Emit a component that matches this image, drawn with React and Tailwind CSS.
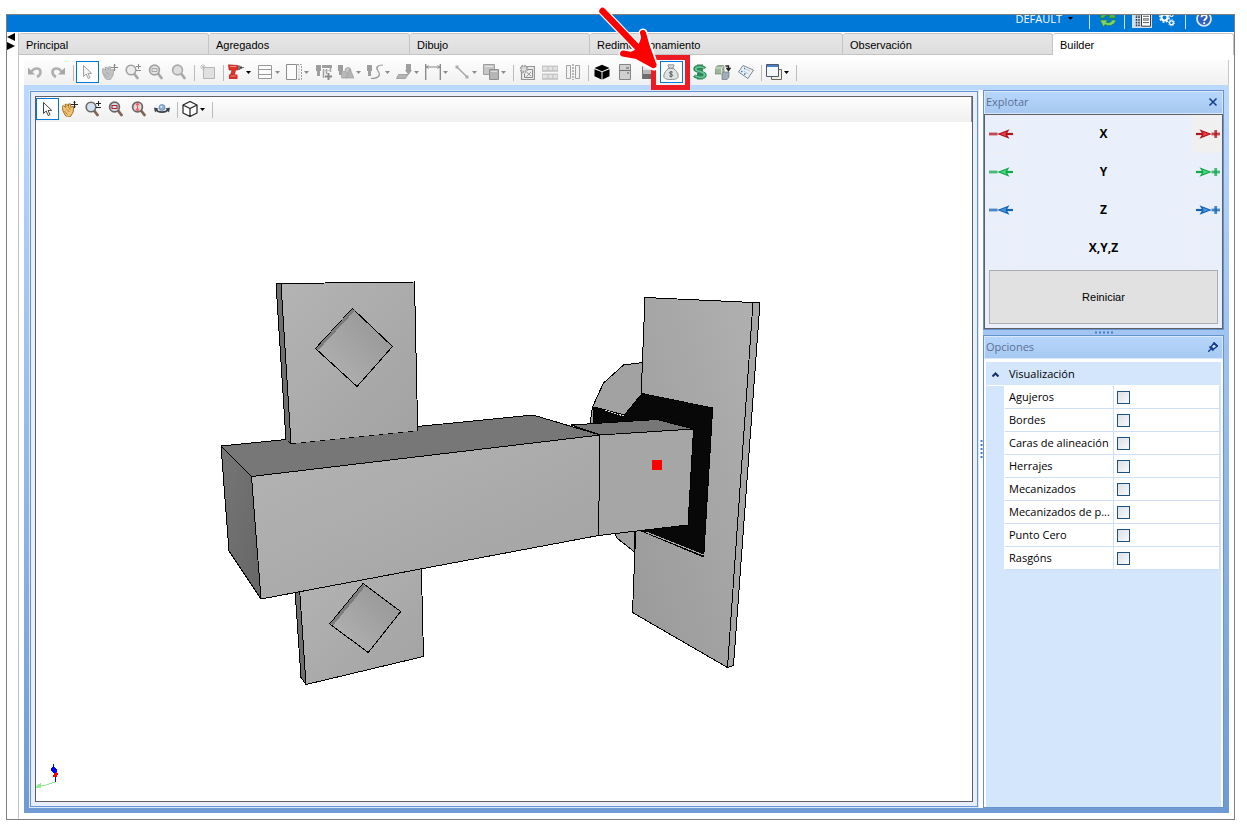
import { useState } from "react";
import clsx from "clsx";

// ── Toolbar icons (16x16) ──────────────────────────────────────────────────
const g = "#9e9e9e";

const icons = {
  undo: (
    <>
      <path d="M4.500 7.500C8 3 13.500 4 13.500 8c0 2-1.500 4-3.500 5" fill="none" stroke="#b0b0b0" strokeWidth="2.600" />
      <path d="M1 3.500v7h7z" fill="#a8a8a8" />
    </>
  ),
  redo: (
    <>
      <path d="M11.500 7.500C8 3 2.500 4 2.500 8c0 2 1.500 4 3.500 5" fill="none" stroke="#b0b0b0" strokeWidth="2.600" />
      <path d="M15 3.500v7H8z" fill="#a8a8a8" />
    </>
  ),
  cursorGray: <path d="M4.500 1.500v11l2.700-2.500 2 4.500 1.800-.8-2-4.300h3.700z" fill="#f4f4f4" stroke="#a0a0a0" />,
  cursor: <path d="M4.500 1.500v11l2.700-2.500 2 4.500 1.800-.8-2-4.300h3.700z" fill="#fff" stroke="#444" />,
  handGray: (
    <>
      <path d="M0 5.500l1.500-1L4 6.500 3 3.500l1.700-.5L6.500 5.500V3l1.800-.2.700 3.700 1-1.200 1.500.7-.3 5L10 13l-2 3H5.500L3 14 1 10z" fill="#c2c2c2" stroke="#a2a2a2" strokeWidth=".8" />
      <path d="M2.500 10l3 3.500M4.500 8l3 3" stroke="#999" strokeWidth=".8" />
      <path d="M12.500 0v7M9 3.500h7M11.500 1.300h2M11.500 5.700h2" stroke="#888" fill="none" />
    </>
  ),
  hand: (
    <>
      <path d="M0 5.500l1.500-1L4 6.500 3 3.500l1.700-.5L6.500 5.500V3l1.800-.2.700 3.700 1-1.200 1.500.7-.3 5L10 13l-2 3H5.500L3 14 1 10z" fill="#f0c274" stroke="#9a6418" strokeWidth=".9" />
      <path d="M2.500 10l3 3.500M4.500 8l3 3M6.500 6l2 3" stroke="#a8701c" strokeWidth=".8" />
      <path d="M12.500 0v7M9 3.500h7M11.500 1.300h2M11.500 5.700h2" stroke="#222" fill="none" />
    </>
  ),
  zoomPmGray: (
    <>
      <path d="M9 9.500l3.500 4.500" stroke="#a8a8a8" strokeWidth="2.800" strokeLinecap="round" />
      <circle cx="6" cy="6" r="4.800" fill="#ececec" stroke="#a2a2a2" strokeWidth="1.600" />
      <path d="M13.500 0v5M11 2.500h5M11 6.500h5" stroke="#8c8c8c" />
    </>
  ),
  zoomPm: (
    <>
      <path d="M9 9.500l3.500 4.500" stroke="#806350" strokeWidth="2.800" strokeLinecap="round" />
      <circle cx="6" cy="6" r="4.800" fill="#d3e2f2" stroke="#686868" strokeWidth="1.600" />
      <path d="M13.500 0v5M11 2.500h5M11 6.500h5" stroke="#222" />
    </>
  ),
  zoomWinGray: (
    <>
      <path d="M10 9.500l3.500 4.500" stroke="#a8a8a8" strokeWidth="2.800" strokeLinecap="round" />
      <circle cx="6.500" cy="6" r="4.900" fill="#e4e4e4" stroke="#a2a2a2" strokeWidth="1.700" />
      <path d="M4 4.500h5v3H4z" fill="none" stroke="#a8a8a8" />
    </>
  ),
  zoomWin: (
    <>
      <path d="M10 9.500l3.500 4.500" stroke="#806350" strokeWidth="2.800" strokeLinecap="round" />
      <circle cx="6.500" cy="6" r="4.900" fill="#d5dbe2" stroke="#686868" strokeWidth="1.700" />
      <path d="M4 4.500h5v3H4z" fill="none" stroke="#b52530" strokeWidth="1.100" />
    </>
  ),
  zoomFitGray: (
    <>
      <path d="M10 9.500l3.500 4.500" stroke="#a8a8a8" strokeWidth="2.800" strokeLinecap="round" />
      <circle cx="6.500" cy="6" r="4.900" fill="#dedede" stroke="#ababab" strokeWidth="1.700" />
    </>
  ),
  zoomFit: (
    <>
      <path d="M10 9.500l3.500 4.500" stroke="#806350" strokeWidth="2.800" strokeLinecap="round" />
      <circle cx="6.500" cy="6" r="4.900" fill="#e3d8da" stroke="#686868" strokeWidth="1.700" />
      <path d="M6.500 2.500v7M5 4l1.500-1.700L8 4M5 8l1.500 1.700L8 8" fill="none" stroke="#ff5a5f" strokeWidth="1.200" />
    </>
  ),
  orbit: (
    <>
      <circle cx="8" cy="6.500" r="3" fill="#8fb0d8" stroke="#5c7ca8" strokeWidth=".7" />
      <circle cx="7.300" cy="5.700" r="1" fill="#e7f0fa" />
      <path d="M2 8.500c2 3.500 10 3.500 12 0" fill="none" stroke="#3a4148" strokeWidth="1.700" />
      <path d="M0 6.500l4.500 1L1 11.500zM16 6.500l-4.500 1 3.500 4z" fill="#3a4148" />
    </>
  ),
  cubeWire: (
    <path d="M8 .5l7 3.500v8L8 15.500 1 12V4zM1 4l7 3.500L15 4M8 7.500v8" fill="#fff" stroke="#222" strokeWidth="1.200" strokeLinejoin="round" />
  ),
  newItem: (
    <>
      <path d="M3.500 3.500h11v11h-11z" fill="#e0e0e0" stroke="#b5b5b5" />
      <path d="M3 0v6M0 3h6M1 1l4 4M5 1L1 5" stroke="#bcbcbc" strokeWidth=".8" />
    </>
  ),
  drill: (
    <>
      <path d="M.5 .8L10 1.500v4.500H7.500L6.500 11H2.500L4 6H1z" fill="#e0342b" stroke="#a01d18" strokeWidth=".6" />
      <path d="M1 10.500h8.500V15H1z" fill="#d42e25" />
      <path d="M10 1.500h2.300V6H10z" fill="#777" />
      <path d="M12 2.500h2v2.300h-2z" fill="#444" />
      <path d="M14 3.600h2" stroke="#666" />
      <path d="M2 2.500h6M2.500 12h5" stroke="#f58a80" />
    </>
  ),
  shelf: <path d="M1.500 1.500h13v13h-13zM1.500 5.500h13M1.500 10.500h13" fill="#fcfcfc" stroke="#999" />,
  dashedBox: (
    <>
      <path d="M.5 .5h10v15H.5z" fill="#fbfbfb" stroke="#8c8c8c" />
      <path d="M11 .5h4.500v15H11" fill="none" stroke="#a0a0a0" strokeDasharray="2 1" />
      <path d="M13 1v15" stroke="#c6c6c6" strokeDasharray="2 1" />
    </>
  ),
  mill: (
    <>
      <path d="M0 1h5v6H4v5H1V7H0zM6 1h10v3H6z" fill={g} />
      <path d="M7.500 5v9M10.500 5v5M14.500 4v4" stroke={g} strokeWidth="1.500" />
      <path d="M7 6.500h8" stroke="#bbb" />
      <path d="M12.500 9v7M9 12.500h7" stroke="#8a8a8a" strokeWidth="2" />
    </>
  ),
  shapes: (
    <>
      <path d="M0 1h5v6H4v4H1V7H0z" fill={g} />
      <path d="M3.500 7.500h6v6.500h-6z" fill="#b9b9b9" stroke={g} strokeWidth=".7" />
      <circle cx="10" cy="6.500" r="3" fill="#c3c3c3" stroke={g} strokeWidth=".7" />
      <path d="M12 5l4 9H8z" fill="#b5b5b5" stroke={g} strokeWidth=".7" />
    </>
  ),
  spline: (
    <>
      <path d="M0 1h5v6H4v5H1V7H0z" fill={g} />
      <path d="M16 1c-5 0-8 2-5 6s1 7.500-7 7.500" fill="none" stroke="#949494" strokeWidth="1.200" />
    </>
  ),
  saw: (
    <>
      <path d="M10 0h5v6h1l-3.500 5L9 6h1z" fill={g} />
      <path d="M2.500 10.500H12l-2.500 4H.5z" fill="#b4b4b4" stroke={g} strokeWidth=".9" />
    </>
  ),
  dimension: (
    <>
      <path d="M.7 0v16M15.300 0v16" stroke="#858585" strokeWidth="1.300" />
      <path d="M1 3h14M3.500 1.500L1.500 3l2 1.500M12.500 1.500l2 1.500-2 1.500" fill="none" stroke="#858585" />
    </>
  ),
  line: (
    <>
      <path d="M3 3l10 10" stroke={g} strokeWidth="1.300" />
      <path d="M1.500 1.500h3v3h-3zM11.500 11.500h3v3h-3z" fill="#adadad" />
    </>
  ),
  copy: (
    <>
      <path d="M.5 .5h11v10H.5z" fill="#c6c6c6" stroke={g} />
      <path d="M2 2.500h8" stroke="#e4e4e4" />
      <path d="M6.500 5.500h9v10h-9z" fill="#b5b5b5" stroke="#8f8f8f" />
      <path d="M8 7.500h6" stroke="#ddd" />
    </>
  ),
  gearPage: (
    <>
      <path d="M2.500 2.500h13v13h-13z" fill="#ececec" stroke="#949494" strokeWidth="1.200" />
      <circle cx="5" cy="5" r="3.200" fill="#dcdcdc" stroke="#a2a2a2" strokeWidth="2.200" strokeDasharray="1.500 1" />
      <path d="M9 5.500h4.500v8H5.500v-4" fill="none" stroke="#8a8a8a" />
      <path d="M8 8.500l4 3.500M12 8l-4.500 4.500" stroke="#999" />
    </>
  ),
  blocks: (
    <>
      <path d="M0 1.500h16v5H0zM0 9.500h16v5H0z" fill="#c9c9c9" />
      <path d="M1 3h4v3H1zM6.500 3h3.500v3H6.500zM11.500 3H15v3h-3.500zM1 11h4v3H1zM6.500 11h3.500v3H6.500zM11.500 11H15v3h-3.500z" fill="#e2e2e2" />
      <path d="M0 7h16M0 15h16" stroke="#a8a8a8" />
    </>
  ),
  mirror: (
    <>
      <path d="M1.500 1.500h4v13h-4zM10.500 1.500h4v13h-4z" fill="#f3f3f3" stroke="#a3a3a3" />
      <path d="M8 0v16" stroke="#777" strokeDasharray="2 1" />
    </>
  ),
  cubeSolid: <path d="M8 .8l7.500 3.200L8 7.200.5 4zM.5 5.200L7.500 8v7.500L.5 12.300zM15.500 5.200L8.500 8v7.500l7-3.200z" fill="#000" />,
  cabinet: (
    <>
      <path d="M2.500 .5h11v15h-11z" fill="#d0d0d0" stroke="#848484" />
      <path d="M2.500 6.500h11" stroke="#707070" />
      <path d="M9 4h3M10 9h2" stroke="#555" />
    </>
  ),
  cabinetDark: (
    <>
      <path d="M2 1h13v5H2z" fill="#e4e4e4" />
      <path d="M2 6h13v4H2z" fill="#b8b8b8" />
      <path d="M2 10h13v5H2z" fill="#6c6c6c" />
      <path d="M2.500 1v14" stroke="#777" />
    </>
  ),
  moneyBag: (
    <>
      <path d="M6 4.200C3 6 .8 9 .8 12c0 2.500 2 3.500 7.200 3.500s7.200-1 7.200-3.500c0-3-2.200-6-5.200-7.800z" fill="#dfe4e2" stroke="#7d8784" strokeWidth=".9" />
      <path d="M4.800 1c1.200-1 1.800.2 3.200-.3 1.400.5 2-.7 3.200.3L10 4.200H6z" fill="#cfd6d3" stroke="#7d8784" strokeWidth=".8" />
      <path d="M9.700 8.300c-1-.9-3.200-.7-3.200.6 0 1.500 3.200.9 3.200 2.400 0 1.300-2.300 1.500-3.500.5M8 7v6.500" fill="none" stroke="#4a5350" strokeWidth=".9" />
    </>
  ),
  dollar: (
    <>
      <path d="M13 4.500C11 1.800 2.800 1.600 2.800 5c0 3.600 10.400 2.200 10.400 6 0 3.600-8.700 3.200-11 .5M6.500 .5v15M9.500 .5v15" fill="none" stroke="#2c8a58" strokeWidth="3" />
      <path d="M12.500 4.500C11 2.500 3.500 2.200 3.500 5c0 3 9.300 2 9.300 6 0 3-7.300 2.800-9.800.5" fill="none" stroke="#6fcb9c" strokeWidth="1.400" />
    </>
  ),
  boxes: (
    <>
      <path d="M0 4l3-2.500h6V8L6.500 10H0z" fill="#9fb59b" stroke="#6f8a6c" strokeWidth=".7" />
      <path d="M0 4h6.500v6M6.500 4L9 1.500" fill="none" stroke="#e0eadd" strokeWidth=".9" />
      <path d="M7 9.500L8.800 8H14v5l-2 2.500H7z" fill="#a3adb8" stroke="#6c7884" strokeWidth=".7" />
      <path d="M10.500 2h3v2.500M12 4.500l1.500 2 1.500-2z" fill="none" stroke="#222" strokeWidth="1.400" />
    </>
  ),
  tag: (
    <>
      <path d="M5 1.500l10.500 4.500L10 14.500.5 8z" fill="#eef2f5" stroke="#7c8791" />
      <path d="M6.500 4.500L12 7M5.500 7l5 3" stroke="#b8c4cf" />
      <path d="M3 7.500h1.500M6 10h1.500M6 4.500h1" stroke="#2f7fd0" strokeWidth="1.400" />
    </>
  ),
  windows: (
    <>
      <path d="M5.500 5.500h10v10h-10z" fill="#f2efdf" stroke="#666" />
      <path d="M.5 .5h12v12H.5z" fill="#f4f6f8" stroke="#4a5868" />
      <path d="M1 1h11v2H1z" fill="#4a80c4" />
    </>
  ),
};

function Icon({ name }) {
  return (
    <svg viewBox="0 0 16 16" className="size-4 shrink-0" aria-hidden="true">
      {icons[name]}
    </svg>
  );
}

function Caret({ className }) {
  return (
    <svg viewBox="0 0 5 3" className={clsx("w-[5px] h-[3px] shrink-0", className)} fill="currentColor" aria-hidden="true">
      <path d="M0 0h5L2.500 3z" />
    </svg>
  );
}

function Sep() {
  return <span className="w-px h-4 mt-1 ml-[3px] mr-[2px] bg-[#bcbcbc] shrink-0" />;
}

function ToolButton({ icon, label, active, children }) {
  return (
    <button
      type="button"
      aria-label={label}
      className={clsx(
        "relative flex items-center pl-[2px] w-[23px] h-[22px] shrink-0 border",
        active ? "border-[#0078d7] bg-white" : "border-transparent"
      )}
    >
      <Icon name={icon} />
      {children}
    </button>
  );
}

function DropButton({ icon, label, dark }) {
  return (
    <button type="button" aria-label={label} aria-haspopup="menu" className="flex items-center gap-[2px] pl-[2px] w-[29px] h-[22px] shrink-0">
      <Icon name={icon} />
      <Caret className={dark ? "text-black" : "text-[#8c8c8c]"} />
    </button>
  );
}

// Red frame and arrow that call out the budget button
function Callout() {
  return (
    <svg viewBox="595 5 100 90" className="absolute z-10 pointer-events-none w-[100px] h-[90px] max-w-none -left-[66px] -top-[57px]" aria-hidden="true">
      <path d="M653.500 57.500h34v30h-34z" fill="none" stroke="#ed1c24" strokeWidth="5" />
      <g strokeLinecap="round" strokeLinejoin="round">
        <path d="M602.500 11L638 48M643 33l11 33-31-12.500" fill="none" stroke="#fff" strokeWidth="9" />
        <path d="M636 46l7-13 11 33-31-12.500z" fill="#fff" />
        <path d="M602.500 11L640 50" fill="none" stroke="#f00" strokeWidth="6.500" />
        <path d="M643 33c0 6 2 10 2 12l8 20-18-11c-4 0-8 0-12-.5 5-1 9-1 14-5z" fill="#f00" />
        <path d="M643 33l4 14 6.500 18M623 53.500l14 2.500 16.500 9" fill="none" stroke="#f00" strokeWidth="6" />
      </g>
    </svg>
  );
}

// ── Title bar ──────────────────────────────────────────────────────────────
function TitleBar() {
  return (
    <header className="flex items-end justify-end h-[17px] overflow-hidden bg-[#0078d7]">
      <div className="flex items-center h-[27px] pr-[22px] text-white shrink-0">
        <button type="button" className="flex items-center gap-[6px] font-['Open_Sans',sans-serif]">
          DEFAULT
          <Caret className="text-black" />
        </button>
        <span className="w-px h-5 ml-4 bg-white/80" />
        <button type="button" aria-label="Actualizar" className="ml-[10px]">
          <svg viewBox="0 0 16 16" className="size-4">
            <path d="M0 7c1-5 7-7 11-4.500L12.500 0 16 7H8.500l1.300-2.300C7 3.700 4.500 5 4 7z" fill="#4db848" stroke="#1f7a25" strokeWidth=".6" />
            <path d="M16 9c-1 5-7 7-11 4.500L3.500 16 0 9h7.500l-1.300 2.300c3 1 5.300-.3 5.800-2.300z" fill="#7fd36a" stroke="#1f7a25" strokeWidth=".6" />
          </svg>
        </button>
        <span className="w-px h-5 ml-2 bg-white/80" />
        <button type="button" aria-label="Lista" className="ml-[7px] bg-[#cfe0f2]">
          <svg viewBox="0 0 20 20" className="w-5 h-[18px]" preserveAspectRatio="none">
            <path d="M4.500 1v17M7 1v17" stroke="#333" strokeWidth="1.500" strokeDasharray="2 1" />
            <path d="M9.500 0h9v18h-9z" fill="#fff" stroke="#333" />
            <path d="M11 4h6M11 7h6M11 14h6" stroke="#555" />
            <path d="M11.500 9.500h5v2h-5z" fill="#bbb" stroke="#555" strokeWidth=".6" />
          </svg>
        </button>
        <button type="button" aria-label="Ajustes" className="ml-[7px]">
          <svg viewBox="0 0 16 16" className="size-4" fill="none" stroke="#fff">
            <circle cx="5.500" cy="6.500" r="3" strokeWidth="2" />
            <circle cx="5.500" cy="6.500" r="4.600" strokeWidth="1.600" strokeDasharray="1.900 1.700" />
            <circle cx="12.500" cy="4" r="1.500" strokeWidth="1.200" />
            <circle cx="12.500" cy="11.800" r="1.900" strokeWidth="1.300" />
            <circle cx="12.500" cy="11.800" r="3" strokeDasharray="1.200 1.100" />
          </svg>
        </button>
        <span className="w-px h-5 ml-[10px] bg-white/80" />
        <button type="button" aria-label="Ayuda" className="ml-[10px]">
          <svg viewBox="0 0 16 16" className="size-4">
            <circle cx="8" cy="8" r="7" fill="#2d62c4" stroke="#dfe8f8" strokeWidth="1.700" />
            <path d="M5.500 6.200c0-3.200 5.200-3 5.200 0 0 1.800-2.500 1.800-2.500 3.800" fill="none" stroke="#fff" strokeWidth="1.800" />
            <circle cx="8.200" cy="12.200" r="1.100" fill="#fff" />
          </svg>
        </button>
      </div>
    </header>
  );
}

// ── Tabs ───────────────────────────────────────────────────────────────────
const tabs = [
  { name: "Principal", width: "w-[190px]" },
  { name: "Agregados", width: "w-[201px]" },
  { name: "Dibujo", width: "w-[180px]" },
  { name: "Redimensionamiento", width: "w-[253px]" },
  { name: "Observación", width: "w-[210px]" },
  { name: "Builder", width: "flex-1" },
];

function Tabs() {
  const [current, setCurrent] = useState("Builder");
  return (
    <nav role="tablist" className="flex h-[22px]">
      {tabs.map((t) => (
        <button
          key={t.name}
          type="button"
          role="tab"
          aria-selected={current === t.name}
          onClick={() => setCurrent(t.name)}
          className={clsx(
            "min-w-0 truncate text-left pl-[7px] border-t border-r rounded-t-[3px] border-[#c4c4c4]",
            t.width,
            current === t.name ? "bg-white" : "bg-linear-to-b from-[#e6e6e6] to-[#dedede] border-b pt-px"
          )}
        >
          {t.name}
        </button>
      ))}
    </nav>
  );
}

function MainToolbar() {
  return (
    <div role="toolbar" className="flex items-start h-[25px] pt-px bg-linear-to-b from-[#fdfdfd] to-[#f0f0f0] border-r border-[#c8c8c8]">
      <ToolButton icon="undo" label="Deshacer" />
      <ToolButton icon="redo" label="Rehacer" />
      <Sep />
      <ToolButton icon="cursorGray" label="Seleccionar" active />
      <ToolButton icon="handGray" label="Mover" />
      <ToolButton icon="zoomPmGray" label="Zoom" />
      <ToolButton icon="zoomWinGray" label="Zoom ventana" />
      <ToolButton icon="zoomFitGray" label="Zoom ajustar" />
      <Sep />
      <ToolButton icon="newItem" label="Nuevo" />
      <Sep />
      <DropButton icon="drill" label="Taladro" dark />
      <DropButton icon="shelf" label="Estante" />
      <DropButton icon="dashedBox" label="Panel" />
      <ToolButton icon="mill" label="Mecanizado" />
      <DropButton icon="shapes" label="Formas" />
      <DropButton icon="spline" label="Curva" />
      <DropButton icon="saw" label="Corte" />
      <DropButton icon="dimension" label="Cota" />
      <DropButton icon="line" label="Línea" />
      <DropButton icon="copy" label="Copiar" />
      <Sep />
      <ToolButton icon="gearPage" label="Propiedades" />
      <ToolButton icon="blocks" label="Bloques" />
      <ToolButton icon="mirror" label="Simetría" />
      <Sep />
      <ToolButton icon="cubeSolid" label="Sólido" />
      <ToolButton icon="cabinet" label="Mueble" />
      <ToolButton icon="cabinetDark" label="Acabado" />
      <ToolButton icon="moneyBag" label="Presupuesto" active>
        <Callout />
      </ToolButton>
      <Sep />
      <ToolButton icon="dollar" label="Precio" />
      <ToolButton icon="boxes" label="Módulos" />
      <ToolButton icon="tag" label="Etiqueta" />
      <Sep />
      <DropButton icon="windows" label="Ventanas" dark />
      <Sep />
    </div>
  );
}

// ── 3D view ────────────────────────────────────────────────────────────────
function Model() {
  return (
    <svg viewBox="36 122 935 679" preserveAspectRatio="xMinYMax meet" className="block w-full h-full" role="img" aria-label="Modelo 3D">
      <defs>
        <linearGradient id="face" x1="0" y1="0" x2="1" y2="1">
          <stop offset="0" stopColor="#b4b4b4" />
          <stop offset="1" stopColor="#a2a2a2" />
        </linearGradient>
        <linearGradient id="faceRight" x1="1" y1="0" x2="0" y2="1">
          <stop offset="0" stopColor="#b0b0b0" />
          <stop offset="1" stopColor="#999" />
        </linearGradient>
        <linearGradient id="notch" x1="0" y1="1" x2="1" y2="0">
          <stop offset="0" stopColor="#b6b6b6" />
          <stop offset="1" stopColor="#929292" />
        </linearGradient>
        <linearGradient id="end" x1="0" y1="0" x2="1" y2="1">
          <stop offset="0" stopColor="#767676" />
          <stop offset="1" stopColor="#666" />
        </linearGradient>
      </defs>
      <g stroke="#000" strokeWidth="1" strokeLinejoin="round" shapeRendering="crispEdges">
        {/* left plate, upper part */}
        <path d="M276 283.500h5l10 160.500-5-4z" fill="#6e6e6e" />
        <path d="M281 283.500l133.500-1.500 3.200 149L291 444z" fill="url(#face)" />
        <path d="M352.500 308.500l40 38-35.500 40-41.500-38z" fill="url(#notch)" />
        <path d="M352 309l3 1.500-37 40-2-2z" fill="#7c7c7c" stroke="none" />
        {/* left plate, lower part */}
        <path d="M295 590l5 0 6 94.500-5-7z" fill="#6e6e6e" />
        <path d="M299.500 588l121.800-22 2.200 90.500L306 684.500z" fill="url(#face)" />
        <path d="M363 583.500l37.700 28-32.400 41-38.600-28.500z" fill="url(#notch)" />
        <path d="M362.500 584.500l2.500 2-32 39-2.500-2z" fill="#7c7c7c" stroke="none" />
        {/* disc behind the right plate */}
        <path d="M643 362.500l-19.500 2.500-20 18-11 24-2.500 17 20 80 7.500 34.500 17 13.500 12-30z" fill="#a2a2a2" />
        {/* right plate */}
        <path d="M645 297.500l108 5-25.500 365-95-55z" fill="url(#faceRight)" />
        <path d="M753 302.500h7l-26.500 363-6 2z" fill="#a6a6a6" />
        <path d="M594 407l30.500 8 17.500-21.500 70.700 14.500-9 149-61-25.500-49-20z" fill="#080808" />
        <path d="M605 410.500l19 5.500" stroke="#ddd" strokeDasharray="2 1" />
        <path d="M646 532l57.500 23" stroke="#aaa" />
        <path d="M610 500l5 34 2.500 4.500 17 13.500V525z" fill="#a2a2a2" />
        {/* main beam */}
        <path d="M221 446l65-6.500 5 4.500 126.500-13v-4.500L533 415l67 20-348.500 41.500z" fill="#777" stroke="none" />
        <path d="M286 439.500L221 446l30.500 30.500L600 435l-67-20-115.500 11.500V431" fill="none" />
        <path d="M251.500 476.500L600 435l-1.500 100.500L261 599z" fill="url(#face)" />
        <path d="M221 446l30.500 30.500L261 599l-32-48z" fill="url(#end)" />
        {/* tenon */}
        <path d="M571.500 425l85.500-5.500 36.500 9.500-93 6z" fill="#777" />
        <path d="M600 435l93.500-6-5.500 96-89.500 10.500z" fill="#a6a6a6" />
      </g>
      <path d="M652 460h10v10h-10z" fill="#f00" />
      {/* axes */}
      <g shapeRendering="crispEdges">
        <path d="M55 782l-9 3-7 1" fill="none" stroke="#90ee90" />
        <path d="M36 786l5-3v5h-5z" fill="#90ee90" />
        <path d="M53.500 764v4M55.500 770v12" stroke="#00f" />
        <path d="M52 767h3l2 3v3h-4l-2-3z" fill="#00f" />
        <path d="M54 773l3-1 1 2-1 3h-4z" fill="#f00" />
      </g>
    </svg>
  );
}

function Viewport() {
  return (
    <main className="flex-1 min-w-0 flex flex-col border border-[#dce9fd]">
      <div className="flex-1 flex flex-col border border-[#6593cf] bg-[#e9effa] p-1">
        <div className="flex-1 flex flex-col border border-[#606060] bg-white">
          <div role="toolbar" className="flex items-start h-[25px] pt-px bg-linear-to-b from-[#fdfdfd] to-[#f0f0f0] border-r border-[#909090]">
            <ToolButton icon="cursor" label="Seleccionar" active />
            <ToolButton icon="hand" label="Mover" />
            <ToolButton icon="zoomPm" label="Zoom" />
            <ToolButton icon="zoomWin" label="Zoom ventana" />
            <ToolButton icon="zoomFit" label="Zoom ajustar" />
            <ToolButton icon="orbit" label="Orbitar" />
            <Sep />
            <DropButton icon="cubeWire" label="Vista" dark />
            <Sep />
          </div>
          <div className="flex-1 min-h-0 basis-0">
            <Model />
          </div>
        </div>
      </div>
    </main>
  );
}

// ── Side panels ────────────────────────────────────────────────────────────
const axes = [
  { name: "X", dark: "#b3121d", light: "#e8434b" },
  { name: "Y", dark: "#12a84c", light: "#4fd883" },
  { name: "Z", dark: "#1464b4", light: "#4b98e0" },
];

function AxisArrow({ axis, plus }) {
  return (
    <svg viewBox="0 0 24 10" className="w-6 h-[10px]" aria-hidden="true">
      <g transform={plus ? undefined : "matrix(-1 0 0 1 24 0)"}>
        <path d="M0 5h7" stroke={axis.dark} strokeWidth="2.200" />
        <path d="M5 1.500L14 5 5 8.500 7 5z" fill={axis.light} stroke={axis.dark} strokeWidth="1.300" />
        <path d="M15.500 5H24" stroke={axis.dark} strokeWidth="2.800" opacity=".75" />
        {plus && <path d="M19.700 1v8" stroke={axis.dark} strokeWidth="2.800" opacity=".75" />}
      </g>
    </svg>
  );
}

function PanelHeader({ title, children }) {
  return (
    <div className="flex items-center justify-between h-[23px] pl-px pr-1 pb-[2px] border border-[#d9e8fc] bg-linear-to-b from-[#b8d6fb] to-[#a6c9f1]">
      <h2 className="text-[#5b6f95]">{title}</h2>
      {children}
    </div>
  );
}

function ExplodePanel() {
  return (
    <section className="border border-[#6593cf]">
      <PanelHeader title="Explotar">
        <button type="button" aria-label="Cerrar">
          <svg viewBox="0 0 10 10" className="size-[10px]" stroke="#15428b" strokeWidth="1.600">
            <path d="M1.500 1.500l7 7M8.500 1.500l-7 7" />
          </svg>
        </button>
      </PanelHeader>
      <div className="border border-[#606060] bg-[#e9f0fb]">
        {axes.map((a) => (
          <div key={a.name} className="flex items-center h-[38px] text-black">
            <button type="button" aria-label={`${a.name} menos`} className="flex items-center justify-end pr-px w-[30px] h-full border-r border-b border-[#eff0f3]">
              <AxisArrow axis={a} />
            </button>
            <span className="flex-1 text-center text-[12px] font-bold">{a.name}</span>
            <button
              type="button"
              aria-label={`${a.name} más`}
              className={clsx("flex items-center justify-center w-[30px] h-full border-l border-b border-[#eff0f3]", a.name === "X" && "bg-[#f0f0f0]")}
            >
              <AxisArrow axis={a} plus />
            </button>
          </div>
        ))}
        <div className="flex items-center h-[38px]">
          <span className="w-[30px] h-full border-r border-[#eff0f3]" />
          <span className="flex-1 text-center text-[12px] font-bold">X,Y,Z</span>
          <span className="w-[30px] h-full border-l border-[#eff0f3]" />
        </div>
        <div className="pt-[3px] px-1 pb-1">
          <button type="button" className="block w-full h-[54px] border border-[#adadad] bg-[#e1e1e1] font-['Liberation_Sans',sans-serif]">
            Reiniciar
          </button>
        </div>
      </div>
    </section>
  );
}

const options = [
  "Agujeros",
  "Bordes",
  "Caras de alineación",
  "Herrajes",
  "Mecanizados",
  "Mecanizados de p...",
  "Punto Cero",
  "Rasgóns",
];

function OptionsPanel() {
  return (
    <section className="flex-1 flex flex-col border border-[#6593cf]">
      <PanelHeader title="Opciones">
        <button type="button" aria-label="Anclar">
          <svg viewBox="0 0 10 10" className="size-[10px]">
            <path d="M0 10l3-3" stroke="#15428b" strokeWidth="1.300" />
            <path d="M1.500 4.500l4 4" stroke="#15428b" strokeWidth="1.800" />
            <path d="M3 5l3-4 3.500 3L5.500 7z" fill="#d4e4f8" stroke="#15428b" strokeWidth="1.400" />
            <path d="M5.500 .5l4 4" stroke="#15428b" strokeWidth="1.800" />
          </svg>
        </button>
      </PanelHeader>
      <div className="flex-1 border-2 border-t-[3px] border-b-0 border-white bg-[#d4e6fb] px-px pt-px">
        <button type="button" aria-expanded="true" className="flex items-center w-full h-[23px] pl-[5px] gap-[10px] border-b border-white">
          <svg viewBox="0 0 7 5" className="w-[7px] h-[5px]" fill="none" stroke="#0f2f6b" strokeWidth="2">
            <path d="M.5 4.500l3-3 3 3" />
          </svg>
          Visualización
        </button>
        <table className="w-full table-fixed border-separate border-spacing-0">
          <colgroup>
            <col className="w-[18px]" />
            <col className="w-[109px]" />
            <col />
          </colgroup>
          <tbody>
            {options.map((o) => (
              <tr key={o} className="h-[23px]">
                <td className="border-r border-white" />
                <td className="p-0 pl-[4px] bg-white border-r border-b border-[#cfe0f6] whitespace-nowrap">
                  <label htmlFor={o}>{o}</label>
                </td>
                <td className="p-0 pl-[3px] bg-white border-b border-r border-[#cfe0f6]">
                  <input
                    id={o}
                    type="checkbox"
                    className="block appearance-none size-[13px] border border-[#1c5180] bg-linear-to-br from-[#dcdfe6] to-[#fafafa] checked:bg-[#1c5180]"
                  />
                </td>
              </tr>
            ))}
          </tbody>
        </table>
      </div>
    </section>
  );
}

function Grip({ vertical }) {
  return (
    <svg viewBox={vertical ? "0 0 3 20" : "0 0 20 3"} className={vertical ? "w-[3px] h-5" : "w-5 h-[3px]"} aria-hidden="true">
      <path d={vertical ? "M1.500 1v20" : "M1 1.500h20"} stroke="#4a7cc4" strokeWidth="2" strokeDasharray="2 2" />
    </svg>
  );
}

// ── App root ───────────────────────────────────────────────────────────────
export default function App() {
  return (
    <div className="flex flex-col min-h-screen bg-white pt-[14px] pl-[6px] pr-3 pb-[7px] font-['Liberation_Sans',sans-serif] text-[11px] leading-4 text-black">
      <div className="flex-1 flex flex-col border border-[#7f7f7f]">
        <TitleBar />
        <div className="flex-1 flex pt-px">
          <div className="w-[11px] shrink-0">
            <svg viewBox="0 0 8 18" className="w-2 h-[18px]" aria-hidden="true">
              <path d="M8 0v8L0 4zM0 9l8 4-8 4z" />
            </svg>
          </div>
          <div className="flex-1 min-w-0 flex flex-col border-l border-[#c4c4c4]">
            <Tabs />
            <div className="flex-1 flex flex-col p-[5px] pb-[6px]">
              <MainToolbar />
              <div className="flex-1 flex bg-linear-to-b from-[#bbd8ff] to-[#6f9ad6] p-[5px]">
                <Viewport />
                <div className="w-1 shrink-0 flex items-center justify-center bg-white">
                  <Grip vertical />
                </div>
                <aside className="w-[241px] shrink-0 flex flex-col font-['Open_Sans',sans-serif]">
                  <ExplodePanel />
                  <div className="h-[5px] flex items-center justify-center bg-[#a3c5f2]">
                    <Grip />
                  </div>
                  <OptionsPanel />
                </aside>
              </div>
            </div>
          </div>
        </div>
      </div>
    </div>
  );
}
